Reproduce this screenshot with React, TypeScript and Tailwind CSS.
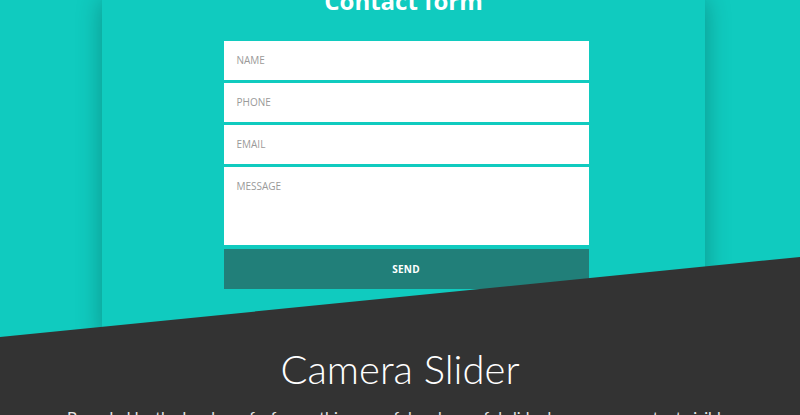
export default function App() {
  const fields = ["NAME", "PHONE", "EMAIL"]

  return (
    <div className="h-[415px] overflow-hidden bg-[#10cbbf]" style={{ fontFamily: "'Open Sans', sans-serif" }}>
      {/* CONTACT CARD */}
      <div className="ml-[102px] w-[603px] h-[340px] bg-[#10cbbf] shadow-[0_0_24px_rgba(0,0,0,0.28)] flex flex-col items-center">
        <h2 className="mt-[-11px] mb-[28px] text-[24px] leading-[24px] font-bold text-white">
          Contact form
        </h2>

        <form className="w-[365px] ml-[5px] flex flex-col">
          {fields.map((f) => (
            <div
              key={f}
              className="h-[39px] mb-[3px] bg-white px-[13px] flex items-center text-[10px] text-[#9a9a9a]"
            >
              {f}
            </div>
          ))}
          <div className="h-[78px] bg-white px-[13px] pt-[12px] text-[10px] leading-[14px] text-[#9a9a9a]">
            MESSAGE
          </div>
          <button
            type="button"
            className="mt-[4px] h-[40px] bg-[#217f79] text-white text-[10px] font-bold tracking-wide"
          >
            SEND
          </button>
        </form>
      </div>

      {/* DARK FOOTER */}
      <div
        className="relative z-10 mt-[-83px] h-[200px] bg-[#333333] text-white text-center pt-[88px]"
        style={{ clipPath: "polygon(0 80px, 100% 0, 100% 100%, 0 100%)", fontFamily: "Lato, sans-serif" }}
      >
        <h1 className="text-[40px] leading-[48px] font-light">Camera Slider</h1>
        <p className="mt-[12px] text-[16px] leading-[24px] text-[#e5e5e5] px-[60px]">
          Bounded by the borders of a frame, this powerful and graceful slider keeps your content visible. Flexible and elegant.
        </p>
      </div>
    </div>
  )
}
